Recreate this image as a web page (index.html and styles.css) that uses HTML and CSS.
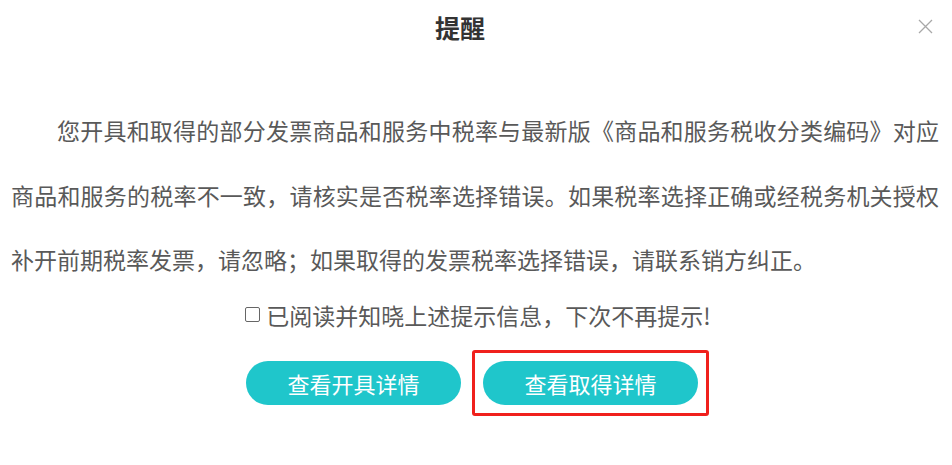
FILE: index.html
```html
<!doctype html>
<html lang="zh-CN">
    <head>
        <meta charset="UTF-8" />
        <meta name="viewport" content="width=device-width, initial-scale=1.0" />
        <title>提醒</title>
        <link rel="stylesheet" href="styles.css">
    </head>
    <body>
        <div class="dialog">
            <div class="dialog-header">
                <h3 class="dialog-title">提醒</h3>
                <button type="button" class="close" aria-label="关闭">
                    <svg width="15" height="15" viewBox="0 0 15 15">
                        <path d="M1 1 L14 14 M14 1 L1 14" stroke="#a8a8a8" stroke-width="1.3" fill="none" />
                    </svg>
                </button>
            </div>

            <div class="dialog-body">
                <p class="notice">您开具和取得的部分发票商品和服务中税率与最新版《商品和服务税收分类编码》对应商品和服务的税率不一致，请核实是否税率选择错误。如果税率选择正确或经税务机关授权补开前期税率发票，请忽略；如果取得的发票税率选择错误，请联系销方纠正。</p>
            </div>

            <div class="dialog-footer">
                <label class="agree">
                    <input type="checkbox" />
                    <span>已阅读并知晓上述提示信息，下次不再提示!</span>
                </label>
                <div class="actions">
                    <button type="button" class="btn">查看开具详情</button>
                    <span class="highlight">
                        <button type="button" class="btn">查看取得详情</button>
                    </span>
                </div>
            </div>
        </div>
    </body>
</html>
```

FILE: styles.css
```css
body {
    margin: 0;
    background: #fff;
    font-family: "Noto Sans CJK SC", "Liberation Sans", sans-serif;
    color: #595959;
}
.dialog {
    width: 952px;
    height: 465px;
    background: #fff;
}
.dialog-header {
    display: flex;
    align-items: center;
    height: 54px;
    padding: 0 19px 0 12px;
}
.dialog-title {
    flex: 1;
    margin: 0;
    text-align: center;
    font-size: 25px;
    font-weight: bold;
    color: #333;
    line-height: 54px;
}
.close {
    width: 15px;
    height: 15px;
    padding: 0;
    margin-left: 10px;
    margin-top: -2px;
    border: none;
    background: none;
    cursor: pointer;
    display: flex;
}
.dialog-body {
    padding: 44px 13px 0 11px;
}
.notice {
    margin: 0;
    font-size: 23px;
    line-height: 64.5px;
    text-indent: 2em;
    text-align: justify;
    color: #595959;
}
.dialog-footer {
    display: flex;
    flex-direction: column;
    align-items: center;
    padding-top: 8px;
}
.agree {
    display: flex;
    align-items: center;
    gap: 6px;
    height: 30px;
    font-size: 23px;
    color: #595959;
    margin-left: 4px;
}
.agree input {
    appearance: none;
    box-sizing: border-box;
    width: 15px;
    height: 15px;
    margin: 0;
    border: 1px solid #666;
    border-radius: 2px;
    background: #fff;
}
.actions {
    display: flex;
    align-items: center;
    gap: 11px;
    margin-top: 20px;
    margin-left: 3px;
}
.btn {
    width: 215px;
    height: 44px;
    border: none;
    border-radius: 22px;
    background-color: #1fc6cb;
    color: #fff;
    font-family: "Noto Sans CJK SC", sans-serif;
    font-size: 22px;
    cursor: pointer;
}
.highlight {
    display: inline-flex;
    padding: 8px;
    border: 3px solid #f0201c;
    border-radius: 3px;
}
```
